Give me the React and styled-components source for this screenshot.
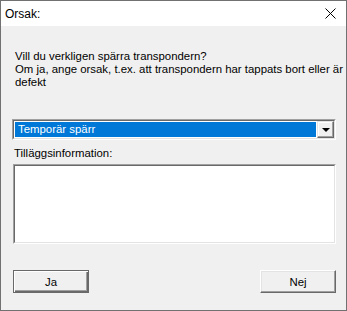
import React from 'react';
import styled, { createGlobalStyle } from 'styled-components';

const Global = createGlobalStyle`
  html, body { margin: 0; padding: 0; background: #ffffff; }
  * { box-sizing: border-box; }
`;

const Window = styled.div`
  width: 347px;
  height: 311px;
  border: 1px solid #717171;
  background: #f0f0f0;
  display: flex;
  flex-direction: column;
  font-family: "Liberation Sans", Arial, sans-serif;
  font-size: 11.4px;
  color: #000;
`;

const TitleBar = styled.div`
  height: 25px;
  background: #ffffff;
  display: flex;
  align-items: center;
  justify-content: space-between;
  padding: 0 0 0 4px;
  font-size: 12px;
`;

const CloseButton = styled.div`
  width: 32px;
  height: 25px;
  display: flex;
  align-items: center;
  justify-content: center;
  padding-bottom: 1px;
`;

const Body = styled.div`
  flex: 1;
  display: flex;
  flex-direction: column;
  padding: 24px 10px 0 11px;
`;

const Message = styled.p`
  margin: 0 0 0 3px;
  line-height: 13px;
  white-space: nowrap;
`;

const Sunken = styled.div`
  border-style: solid;
  border-width: 1px;
  border-color: #a0a0a0 #ffffff #ffffff #a0a0a0;
`;

const SunkenInner = styled.div`
  border-style: solid;
  border-width: 1px;
  border-color: #696969 #e3e3e3 #e3e3e3 #696969;
  height: 100%;
  display: flex;
  background: #ffffff;
`;

const SelectBox = styled(Sunken)`
  margin-top: 30px;
  height: 21px;
`;

const Selected = styled.div`
  flex: 1;
  margin: 1px;
  background: #0078d7;
  color: #ffffff;
  line-height: 15px;
  padding-left: 3px;
`;

const ArrowButton = styled.div`
  width: 17px;
  border-style: solid;
  border-width: 1px;
  border-color: #e3e3e3 #696969 #696969 #e3e3e3;
  background: #f0f0f0;
  display: flex;
  align-items: center;
  justify-content: center;
  box-shadow: inset -1px -1px 0 #a0a0a0, inset 1px 1px 0 #ffffff;
`;

const Arrow = styled.div`
  width: 0;
  height: 0;
  border-left: 4px solid transparent;
  border-right: 4px solid transparent;
  border-top: 4px solid #000;
  margin-top: 1px;
`;

const Label = styled.div`
  margin: 7px 0 0 2px;
  line-height: 13px;
`;

const TextArea = styled(Sunken)`
  margin: 4px 0 0 1px;
  height: 80px;
`;

const Buttons = styled.div`
  margin: 26px 0 0 1px;
  display: flex;
  justify-content: space-between;
`;

const Button = styled.div`
  width: 76px;
  height: 23px;
  display: flex;
  align-items: center;
  justify-content: center;
  background: #f0f0f0;
  border: 1px solid;
  border-color: ${p => p.$default ? '#696969' : '#ffffff #696969 #696969 #ffffff'};
  box-shadow: ${p => p.$default
    ? 'inset 1px 1px 0 #ffffff, inset -1px -1px 0 #696969, inset -2px -2px 0 #a0a0a0'
    : 'inset -1px -1px 0 #a0a0a0, inset 1px 1px 0 #e3e3e3'};
`;

export default function App() {
  return (
    <>
      <Global />
      <Window>
        <TitleBar>
          <span>Orsak:</span>
          <CloseButton>
            <svg width="11" height="11" viewBox="0 0 11 11">
              <path d="M0.5 0.5 L10.5 10.5 M10.5 0.5 L0.5 10.5" stroke="#000" strokeWidth="1" />
            </svg>
          </CloseButton>
        </TitleBar>
        <Body>
          <Message>
            Vill du verkligen spärra transpondern?<br />
            Om ja, ange orsak, t.ex. att transpondern har tappats bort eller är<br />
            defekt
          </Message>
          <SelectBox>
            <SunkenInner>
              <Selected>Temporär spärr</Selected>
              <ArrowButton><Arrow /></ArrowButton>
            </SunkenInner>
          </SelectBox>
          <Label>Tilläggsinformation:</Label>
          <TextArea>
            <SunkenInner />
          </TextArea>
          <Buttons>
            <Button $default>Ja</Button>
            <Button>Nej</Button>
          </Buttons>
        </Body>
      </Window>
    </>
  );
}
